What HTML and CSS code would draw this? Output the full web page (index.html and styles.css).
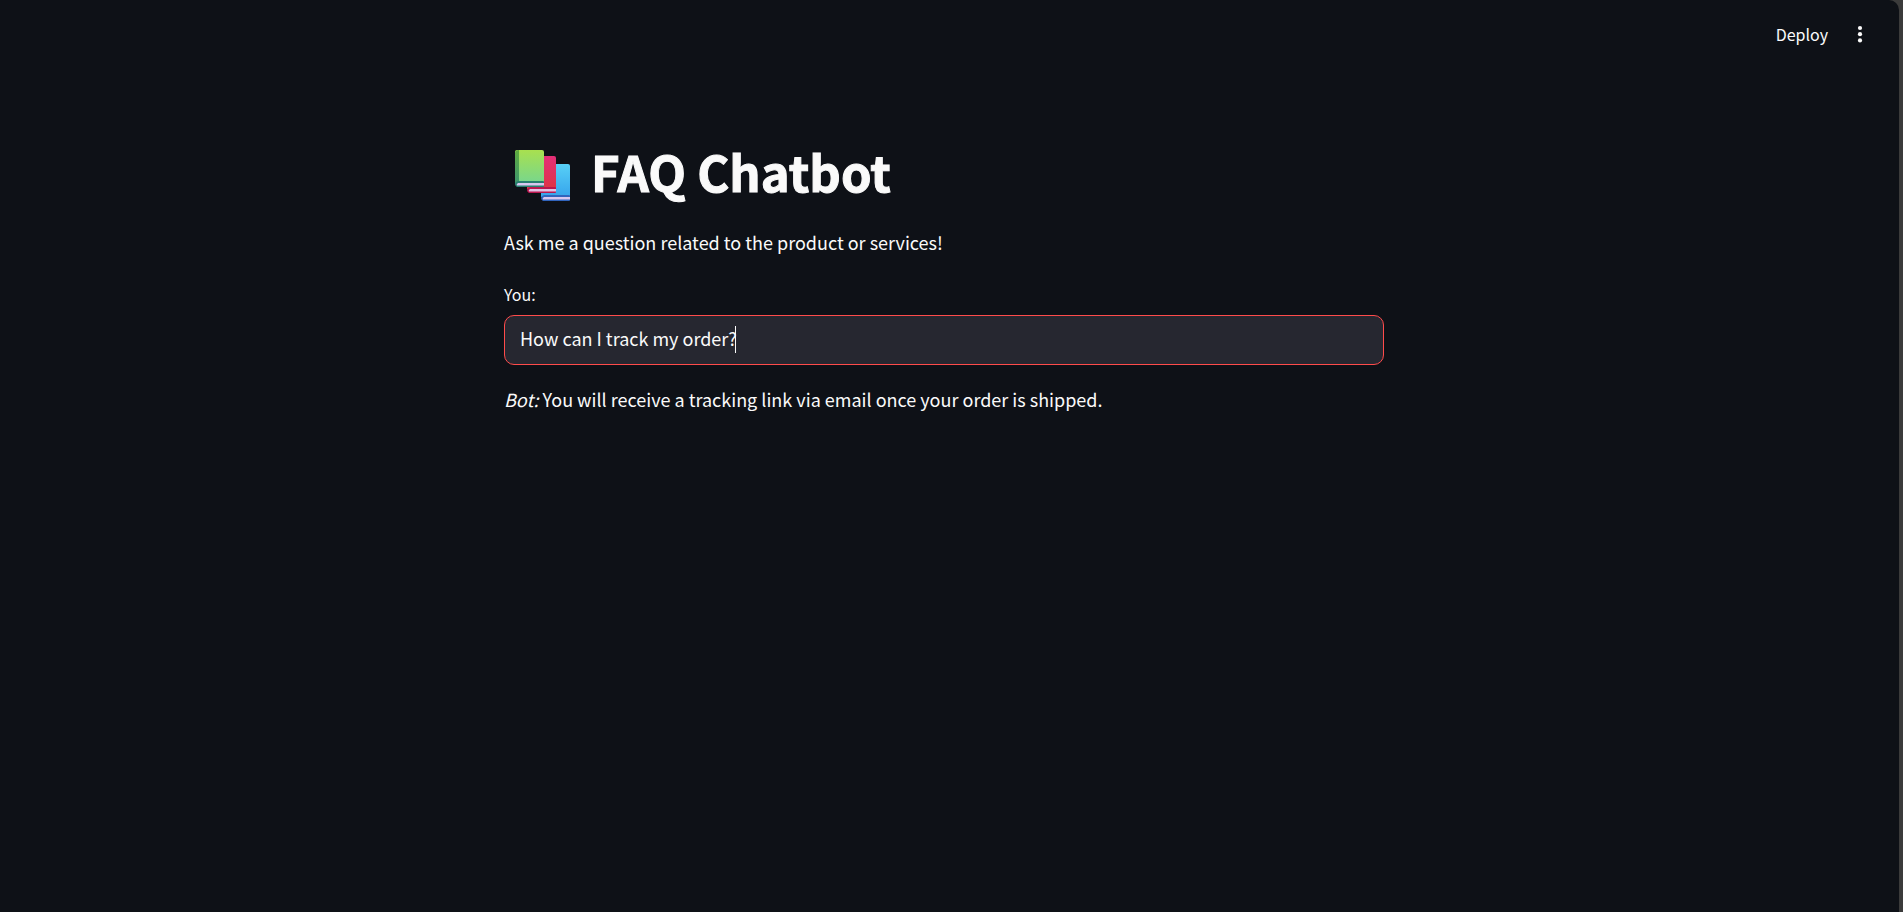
FILE: index.html
```html
<!DOCTYPE html>
<html lang="en">
<head>
<meta charset="utf-8">
<title>FAQ Chatbot</title>
<link rel="stylesheet" href="styles.css">
</head>
<body>
<div class="app">
  <header class="toolbar">
    <button class="deploy" type="button">Deploy</button>
    <button class="menu" type="button" aria-label="Main menu">
      <svg width="20" height="20" viewBox="0 0 20 20" fill="currentColor" aria-hidden="true"><circle cx="10" cy="4" r="2.1"/><circle cx="10" cy="10.2" r="2.1"/><circle cx="10" cy="16.4" r="2.1"/></svg>
    </button>
  </header>
  <main class="content">
    <h1 class="title">
      <svg class="books" width="56" height="52" viewBox="0 0 56 52" aria-hidden="true">
        <defs>
          <linearGradient id="green" x2="0" y2="1"><stop stop-color="#a8e04f"/><stop offset="1" stop-color="#76d68f"/></linearGradient>
          <linearGradient id="spine" x2="0" y2="1"><stop stop-color="#5fab3f"/><stop offset="1" stop-color="#3c9670"/></linearGradient>
          <linearGradient id="red" x2="0" y2="1"><stop stop-color="#e32f78"/><stop offset="1" stop-color="#de3546"/></linearGradient>
          <linearGradient id="blue" x2="0" y2="1"><stop stop-color="#58d0f6"/><stop offset="1" stop-color="#36a4ec"/></linearGradient>
        </defs>
        <path d="M26 16q0-2 2-2h25q2 0 2 2v31H26z" fill="url(#blue)"/>
        <path d="M29 45h25q1 0 1 1v4q0 1-1 1H28q-2-1-2-3t3-3z" fill="#3064bd"/>
        <path d="M29 47h26v2.500H28q-1-1.500 1-2.500z" fill="#d8c7ef"/>
        <path d="M12 8q0-2 2-2h25q2 0 2 2v31H12z" fill="url(#red)"/>
        <path d="M15 37h25q1 0 1 1v4q0 1-1 1H14q-2-1-2-3t3-3z" fill="#bb174f"/>
        <path d="M15 39h26v2.500H14q-1-1.500 1-2.500z" fill="#e2c2e5"/>
        <path d="M0 2q0-2 2-2h25q2 0 2 2v32H0z" fill="url(#green)"/>
        <path d="M0 3q0-3 4-3v32l-4 3z" fill="url(#spine)"/>
        <path d="M3 31h25q1 0 1 1v4q0 1-1 1H2q-2-1-2-3t3-3z" fill="#297e70"/>
        <path d="M3 33h26v2.500H2q-1-1.500 1-2.500z" fill="#d8c7ef"/>
      </svg>
      <span class="title-text">FAQ Chatbot</span>
    </h1>
    <p class="text">Ask me a question related to the product or services!</p>
    <form class="field">
      <label class="label" for="question">You:</label>
      <div class="input-box">
        <input class="input" id="question" type="text" value="How can I track my order?" autocomplete="off">
        <span class="caret" aria-hidden="true"></span>
      </div>
    </form>
    <p class="text"><em>Bot:</em> You will receive a tracking link via email once your order is shipped.</p>
  </main>
</div>
</body>
</html>
```
FILE: styles.css
```css
* {
  box-sizing: border-box;
}

body {
  margin: 0;
  padding-right: 4px;
  background: #3b3b3b;
  color: #fafafa;
  font-family: "Noto Sans CJK SC", "Noto Sans", sans-serif;
  font-size: 18px;
  line-height: 32px;
}

.app {
  min-height: 100vh;
  padding-right: 11px;
  background: #0e1117;
  border-top-right-radius: 10px;
}

.toolbar {
  display: flex;
  justify-content: flex-end;
  align-items: center;
  gap: 22px;
  height: 68px;
  padding-right: 18px;
}

.deploy,
.menu {
  padding: 0;
  border: 0;
  background: none;
  color: inherit;
  font: inherit;
  cursor: pointer;
}

.deploy {
  font-size: 16px;
}

.menu {
  display: flex;
}

.content {
  max-width: 880px;
  margin: 0 auto;
  padding-top: 74px;
}

.title {
  display: flex;
  align-items: center;
  gap: 20px;
  margin: 0 0 16px;
  padding-left: 11px;
  font-size: 49px;
  font-weight: 700;
  line-height: 58px;
}

.title-text {
  padding-bottom: 10px;
  -webkit-text-stroke: 1px currentColor;
}

.text {
  margin: 0;
}

.field {
  margin: 22px 0 18px;
}

.label {
  display: block;
  margin-bottom: 7px;
  font-size: 16px;
  line-height: 28px;
}

.input-box {
  position: relative;
}

.input {
  display: block;
  width: 100%;
  height: 50px;
  padding: 0 15px 4px;
  border: 1px solid #ff4b4b;
  border-radius: 10px;
  outline: 0;
  background: #262730;
  color: inherit;
  font: inherit;
}

.caret {
  position: absolute;
  top: 11px;
  left: 231px;
  width: 1px;
  height: 27px;
  background: #fafafa;
}
```
